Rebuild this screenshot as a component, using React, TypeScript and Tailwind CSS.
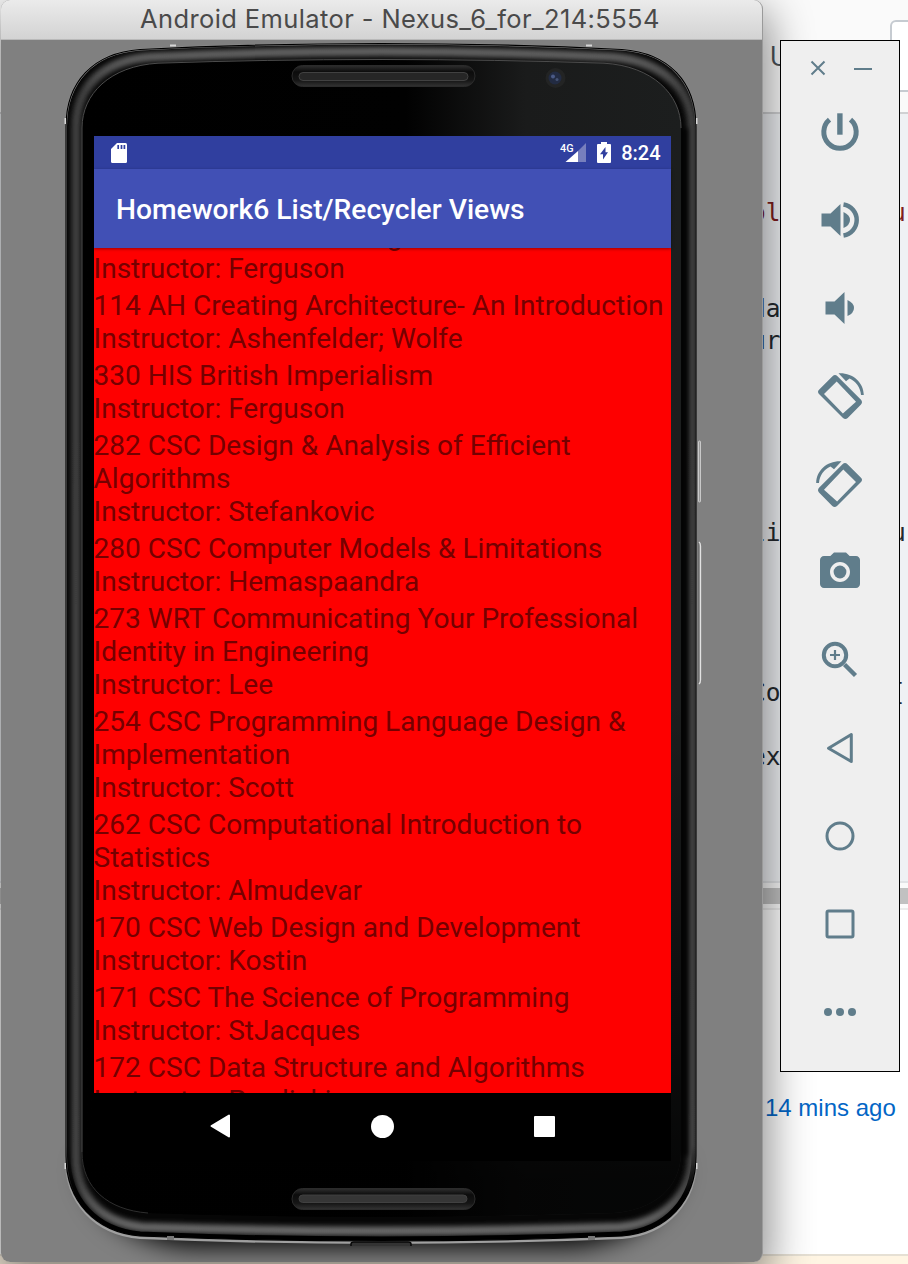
import React from "react";

const SLATE = "#607d8b";

type Course = { title: string; instructor: string };

const courses: Course[] = [
  { title: "329 HIS Iron War Making", instructor: "Ferguson" },
  { title: "114 AH Creating Architecture- An Introduction", instructor: "Ashenfelder; Wolfe" },
  { title: "330 HIS British Imperialism", instructor: "Ferguson" },
  { title: "282 CSC Design & Analysis of Efficient Algorithms", instructor: "Stefankovic" },
  { title: "280 CSC Computer Models & Limitations", instructor: "Hemaspaandra" },
  { title: "273 WRT Communicating Your Professional Identity in Engineering", instructor: "Lee" },
  { title: "254 CSC Programming Language Design & Implementation", instructor: "Scott" },
  { title: "262 CSC Computational Introduction to Statistics", instructor: "Almudevar" },
  { title: "170 CSC Web Design and Development", instructor: "Kostin" },
  { title: "171 CSC The Science of Programming", instructor: "StJacques" },
  { title: "172 CSC Data Structure and Algorithms", instructor: "Pawlicki" },
];

type CodeLine = { left?: string; right?: string; leftClass?: string; rightClass?: string };

const E: CodeLine = {};
const codeLines: CodeLine[] = [
  { left: "ol", right: "u", leftClass: "text-[#7f1d1d]", rightClass: "text-[#7f1d1d]" },
  E,
  E,
  { left: "da", right: " r" },
  { left: "ur", right: " r" },
  E,
  E,
  E,
  E,
  E,
  { left: "li", right: "u" },
  E,
  E,
  E,
  E,
  { left: "Co", right: "[" },
  E,
  { left: "ex" },
];

function Backdrop() {
  return (
    <div className="flex h-[1264px] w-[908px] flex-col bg-white">
      <div className="flex h-[114px] shrink-0 justify-end border-b-2 border-[#d0d1d3] bg-[#fafafa]">
        <span className="mt-[36px] mr-[100px] font-['Open_Sans',sans-serif] text-[28px] leading-[38px] text-[#4b5258]">U</span>
        <div className="-mr-3 mt-5 h-[72px] w-[30px] rounded-md border-2 border-[#c6cbd1] bg-white" />
      </div>
      <div className="h-[767px] shrink-0 bg-[#eff1f4] pt-[83px] font-['DejaVu_Sans_Mono',monospace] text-[24.5px] leading-8 text-[#24292e]">
        {codeLines.map((l, i) => (
          <div key={i} className="flex h-8 whitespace-pre pl-[751px]">
            <span className={`w-[140px] shrink-0 ${l.leftClass ?? ""}`}>{l.left}</span>
            <span className={l.rightClass ?? (l.right === " r" ? "text-[#b3613a]" : "")}>{l.right}</span>
          </div>
        ))}
      </div>
      <div className="h-[7px] shrink-0 border-t-2 border-[#e1e3e6] bg-[#fafafa]" />
      <div className="h-4 shrink-0 bg-[#c1c1c1]" />
      <div className="h-1 shrink-0 bg-[#fcfcfc]" />
      <div className="h-[346px] shrink-0 border-t-2 border-[#ececec] pl-[765px] pt-[182px]">
        <span className="whitespace-nowrap font-['Liberation_Sans',sans-serif] text-[24px] leading-8 text-[#0366c6]">14 mins ago</span>
      </div>
      <div className="h-[10px] shrink-0 border-t-2 border-[#e6e0d4] bg-[#fff5e3]" />
    </div>
  );
}

const OUTER =
  "M66 127 C66 82 93 53 140 49.5 Q260 43.5 381 43.5 Q502 43.5 622 49.5 C669 53 696 82 696 127 V1156 C696 1201 667 1232 622 1236 Q502 1241 381 1241 Q260 1241 140 1236 C95 1232 66 1201 66 1156 Z";
const INNER =
  "M82 128 C82 94 110 66 158 63.2 Q265 59.5 381 59.5 Q497 59.5 604 63.2 C652 66 681 94 681 128 V1152 C681 1188 654 1210 614 1213 Q497 1217 381 1217 Q265 1217 148 1213 C108 1210 82 1188 82 1152 Z";
const RIM =
  "M76 128 C76 88 101 61 150 57 Q265 51.5 381 51.5 Q497 51.5 612 57 C661 61 692 88 692 128 V1156 C692 1196 662 1223 620 1227 Q502 1231 381 1231 Q260 1231 142 1227 C100 1222 76 1196 76 1156 Z";

function PhoneBody() {
  return (
    <svg className="absolute left-0 top-0" width="762" height="1262" viewBox="0 0 762 1262">
      <defs>
        <linearGradient id="rim" x1="0" x2="0" y1="44" y2="1240" gradientUnits="userSpaceOnUse">
          <stop offset="0" stopColor="#686868" />
          <stop offset=".04" stopColor="#404040" />
          <stop offset=".1" stopColor="#404040" />
          <stop offset=".95" stopColor="#444" />
          <stop offset="1" stopColor="#707070" />
        </linearGradient>
        <linearGradient id="glass" x1="82" x2="681" y1="0" y2="0" gradientUnits="userSpaceOnUse">
          <stop offset="0" stopColor="#000" />
          <stop offset=".54" stopColor="#010101" />
          <stop offset=".74" stopColor="#1a1b1b" />
          <stop offset="1" stopColor="#1c1e1e" />
        </linearGradient>
        <linearGradient id="fade" x1="0" x2="0" y1="700" y2="1180" gradientUnits="userSpaceOnUse">
          <stop offset="0" stopColor="#000" stopOpacity="0" />
          <stop offset="1" stopColor="#000" stopOpacity=".8" />
        </linearGradient>
        <linearGradient id="slot" x1="0" x2="0" y1="0" y2="1">
          <stop offset="0" stopColor="#2f2f2f" />
          <stop offset=".3" stopColor="#0c0c0c" />
          <stop offset=".7" stopColor="#151515" />
          <stop offset="1" stopColor="#333" />
        </linearGradient>
        <linearGradient id="metal" x1="0" x2="0" y1="1150" y2="1190" gradientUnits="userSpaceOnUse">
          <stop offset="0" stopColor="#a8a8a8" stopOpacity="0" />
          <stop offset="1" stopColor="#a0a0a0" />
        </linearGradient>
        <linearGradient id="seam" x1="0" x2="0" y1="1145" y2="1195" gradientUnits="userSpaceOnUse">
          <stop offset="0" stopColor="#000" stopOpacity="0" />
          <stop offset="1" stopColor="#000" />
        </linearGradient>
        <filter id="shade" x="-20%" y="-60%" width="140%" height="220%">
          <feGaussianBlur stdDeviation="13" />
        </filter>
        <filter id="soft" x="0" y="0" width="762" height="1262" filterUnits="userSpaceOnUse">
          <feGaussianBlur stdDeviation="2.500" />
        </filter>
        <clipPath id="outerClip">
          <path d={OUTER} />
        </clipPath>
      </defs>
      <path d="M84 1165 C96 1222 140 1242 190 1247 H572 C622 1242 668 1222 680 1165 Z" fill="#060606" filter="url(#shade)" />
      <path d={OUTER} fill="none" stroke="url(#metal)" strokeWidth="3" transform="translate(0 1.500)" />
      <path d={OUTER} fill="#060606" stroke="#8f8f8f" strokeWidth="2" />
      <g clipPath="url(#outerClip)">
        <path d={RIM} fill="none" stroke="url(#rim)" strokeWidth="9" filter="url(#soft)" />
        <path d="M685 128 V1156" stroke="#000" strokeWidth="5" filter="url(#soft)" />
        <path d="M66 1145 V1156 C66 1201 95 1232 140 1236 Q260 1241 381 1241 Q502 1241 622 1236 C667 1232 696 1201 696 1156 V1145" fill="none" stroke="url(#seam)" strokeWidth="9" />
      </g>
      <path d={OUTER} fill="none" stroke="#000" strokeWidth="1.200" />
      <path d={INNER} fill="url(#glass)" />
      <path d={INNER} fill="url(#fade)" />
      <path d="M681 128 C681 94 652 66 604 63.2 Q497 59.5 381 59.5 Q265 59.5 158 63.2 C110 66 82 94 82 128 V1152" fill="none" stroke="#4c4c4c" strokeWidth="1" />
      <path d="M82 1152 C82 1188 108 1210 148 1213" fill="none" stroke="#2e2e2e" strokeWidth="1" />
      <g fill="#d6d6d6">
        <rect x="170" y="44.500" width="6" height="2" />
        <rect x="586" y="44.500" width="6" height="2" />
        <rect x="64.500" y="118" width="1.500" height="6" />
        <rect x="696" y="118" width="1.500" height="6" />
        <rect x="64.500" y="1163" width="1.500" height="6" />
        <rect x="696" y="1163" width="1.500" height="6" />
      </g>
      <rect x="167" y="1236" width="7" height="4" fill="#777" />
      <rect x="588" y="1236" width="7" height="4" fill="#777" />
      <path d="M351 1246 v-2 q0 -2 3 -2 h54 q3 0 3 2 v2" fill="#333" stroke="#080808" strokeWidth="1.500" />
      <rect x="292" y="65.500" width="183" height="21" rx="10.500" fill="url(#slot)" stroke="#2b2b2b" />
      <rect x="299" y="72.500" width="169" height="8" rx="4" fill="#262626" stroke="#414141" />
      <rect x="292" y="1188.500" width="183" height="21" rx="10.500" fill="url(#slot)" stroke="#2b2b2b" />
      <rect x="299" y="1195" width="168" height="7.500" rx="3.700" fill="#363636" stroke="#414141" />
      <circle cx="555.500" cy="78" r="10" fill="#232424" />
      <circle cx="555" cy="78" r="6.500" fill="#222b42" />
      <circle cx="553" cy="76.500" r="2" fill="#4a5a86" />
      <circle cx="557" cy="79.500" r="1.500" fill="#445274" />
      <rect x="698.500" y="441" width="2" height="61" rx="1" fill="#999" stroke="#d8d8d8" strokeWidth=".8" />
      <path d="M698.500 543 V683" stroke="#707070" />
      <path d="M699 542 q1.500 1 1.500 4 V680 q0 3 -1.500 4" fill="none" stroke="#e2e2e2" strokeWidth="1.300" />
    </svg>
  );
}

function StatusBar() {
  return (
    <div className="flex h-[33px] shrink-0 items-center bg-[#303f9f] pl-[17px] pr-[10.500px] text-white">
      <svg width="16" height="20" viewBox="0 0 16 20" fill="none">
        <path d="M6 0H14.500Q16 0 16 1.500V18.500Q16 20 14.500 20H1.500Q0 20 0 18.500V6Z" fill="white" />
        <path d="M7.200 2V6M10.500 2V6M13.400 2V6" stroke="#303f9f" strokeWidth="1.700" />
      </svg>
      <div className="flex-1" />
      <svg width="27" height="21" viewBox="0 0 27 21">
        <path d="M26 1V20H18V9Z" fill="#777fbd" />
        <path d="M18 9V20H5.500Z" fill="white" />
        <text x="0" y="9.500" fill="white" fontFamily="Roboto, sans-serif" fontWeight="500" fontSize="11.500" textLength="13.500" lengthAdjust="spacingAndGlyphs">4G</text>
      </svg>
      <svg className="ml-[10px]" width="14" height="21" viewBox="0 0 14 21">
        <path d="M4 0H10V2H13Q14 2 14 3V20Q14 21 13 21H1Q0 21 0 20V3Q0 2 1 2H4Z" fill="white" />
        <path d="M8.500 5L3 12.300H6V17.500L11 10.200H8.500Z" fill="#303f9f" />
      </svg>
      <span className="ml-[10px] text-[20px] font-medium leading-6">8:24</span>
    </div>
  );
}

function Screen() {
  return (
    <div className="ml-[92.500px] mt-[96px] flex h-[1025px] w-[577.500px] flex-col font-['Roboto',sans-serif]">
      <StatusBar />
      <div className="relative z-10 flex h-[78.500px] shrink-0 items-center bg-[#4150b5] pl-[22.500px] pt-[3px] shadow-[0_1px_3px_rgba(0,0,0,0.4)]">
        <h1 className="whitespace-nowrap text-[28.200px] font-medium leading-8 text-white">Homework6 List/Recycler Views</h1>
      </div>
      <div className="h-[845.500px] shrink-0 overflow-hidden bg-[#fe0000]">
        <ul className="-mt-[27.200px] space-y-1 text-[28.070px] leading-[32.970px] text-[#750000]">
          {courses.map((c) => (
            <li key={c.title}>
              <p>{c.title}</p>
              <p>Instructor: {c.instructor}</p>
            </li>
          ))}
        </ul>
      </div>
      <nav className="flex h-[68px] shrink-0 items-center justify-between bg-black pb-[2px] pl-[116px] pr-[116px]">
        <svg width="21" height="24" viewBox="0 0 21 24">
          <path d="M19 1.500V22.500L1.500 12Z" fill="white" stroke="white" strokeWidth="2" strokeLinejoin="round" />
        </svg>
        <div className="size-[23px] rounded-full bg-white" />
        <div className="size-[21px] rounded-[1px] bg-white" />
      </nav>
    </div>
  );
}

function EmulatorWindow() {
  return (
    <section className="absolute left-[1px] top-0 h-[1262px] w-[762px] rounded-[10px] shadow-[0_16px_44px_6px_rgba(0,0,0,0.46)]">
      <div className="flex h-full flex-col overflow-hidden rounded-[9px] border-r border-[#9a9a9a] bg-[#808080]">
        <header className="flex h-10 shrink-0 items-center border-b border-[#b9b9b9] bg-gradient-to-b from-[#ebebeb] to-[#d3d3d3] pl-[139px] pb-[2px]">
          <span className="whitespace-nowrap font-['Inter',sans-serif] text-[25.500px] leading-8 tracking-[0.390px] text-[#4a4a4a]">Android Emulator - Nexus_6_for_214:5554</span>
        </header>
        <div className="relative flex-1">
          <div className="absolute -left-px -top-10">
            <PhoneBody />
          </div>
          <div className="relative">
            <Screen />
          </div>
        </div>
      </div>
    </section>
  );
}

function Toolbar() {
  return (
    <aside className="absolute left-[780px] top-10 flex h-[1032px] w-[120px] flex-col items-center border border-black bg-[#efefef]">
      <div className="flex h-[47px] w-full shrink-0 items-center pl-[29px] pt-[6px]">
        <svg width="16" height="16" viewBox="0 0 16 16" stroke={SLATE} strokeWidth="2">
          <path d="M1.500 1.500L14.500 14.500M14.500 1.500L1.500 14.500" />
        </svg>
        <div className="ml-7 mt-[2px] h-[2px] w-[18px] bg-[#607d8b]" />
      </div>
      <div className="flex flex-col items-center gap-10 pt-5">
        <svg width="48" height="48" viewBox="0 0 48 48" fill="none" stroke={SLATE} strokeWidth="5">
          <path d="M13.500 11.700A16.200 16.200 0 1 0 34.500 11.700" />
          <path d="M23.900 5.300V26.700" strokeWidth="5.400" />
        </svg>
        <svg width="48" height="48" viewBox="0 0 48 48" fill={SLATE}>
          <path d="M5.500 17.500H14.500L24.500 8V40L14.500 30.500H5.500Z" />
          <path d="M27.500 16Q34 19 34 24T27.500 32Z" />
          <path d="M27.500 8.500A15.700 15.700 0 0 1 27.500 39.500" fill="none" stroke={SLATE} strokeWidth="4.500" />
        </svg>
        <svg width="48" height="48" viewBox="0 0 48 48" fill={SLATE}>
          <path d="M9.500 17.500H18.500L28.500 8V40L18.500 30.500H9.500Z" />
          <path d="M31.500 16Q38 19 38 24T31.500 32Z" />
        </svg>
        <RotateIcon />
        <RotateIcon mirrored />
        <svg width="48" height="48" viewBox="0 0 24 24" fill={SLATE}>
          <circle cx="12" cy="12" r="3.200" />
          <path d="M9 2.200L7.170 4H4c-1.100 0-2 .9-2 2v12c0 1.100.9 2 2 2h16c1.100 0 2-.9 2-2V6c0-1.100-.9-2-2-2h-3.170L15 2.200H9zm3 14.800c-2.760 0-5-2.240-5-5s2.240-5 5-5 5 2.240 5 5-2.240 5-5 5z" />
        </svg>
        <svg width="48" height="48" viewBox="0 0 48 48" fill="none" stroke={SLATE}>
          <circle cx="19" cy="19" r="11.200" strokeWidth="4" />
          <path d="M14 19H24M19 14V24" strokeWidth="2.200" />
          <path d="M28.500 28.500L39.500 39.500" strokeWidth="4.400" />
        </svg>
        <svg width="48" height="48" viewBox="0 0 48 48" fill="none" stroke={SLATE} strokeWidth="3" strokeLinejoin="round">
          <path d="M35.300 10.500V37.500L12.500 24.200Z" />
        </svg>
        <svg width="48" height="48" viewBox="0 0 48 48" fill="none" stroke={SLATE} strokeWidth="3">
          <circle cx="24" cy="24" r="13" />
        </svg>
        <svg width="48" height="48" viewBox="0 0 48 48" fill="none" stroke={SLATE} strokeWidth="3">
          <rect x="11" y="11" width="26" height="26" rx="1.500" />
        </svg>
        <svg width="48" height="48" viewBox="0 0 48 48" fill={SLATE}>
          <circle cx="12" cy="24" r="4" />
          <circle cx="24" cy="24" r="4" />
          <circle cx="36" cy="24" r="4" />
        </svg>
      </div>
    </aside>
  );
}

function RotateIcon({ mirrored = false }: { mirrored?: boolean }) {
  return (
    <svg className={mirrored ? "-scale-x-100" : ""} width="48" height="48" viewBox="0 0 48 48" overflow="visible">
      <path
        d="M16.500 4.200Q19 2 21.500 4.200L45 27.800Q47 30.200 45 32.500L31.700 46Q29.400 48 27 46L3 22Q1 19.700 3 17.700Z M20.700 9.500L8 22L26.900 41.500L40 29.700Z"
        fill={SLATE}
        fillRule="evenodd"
      />
      <path d="M22.500 1.300C36.500 0.500 47.500 10 47.800 23H45C44.500 15.500 40 9.500 33.500 6.500L30 9.200Z" fill={SLATE} />
    </svg>
  );
}

export default function App() {
  return (
    <main className="relative h-[1264px] w-[908px] overflow-hidden">
      <Backdrop />
      <EmulatorWindow />
      <Toolbar />
    </main>
  );
}
